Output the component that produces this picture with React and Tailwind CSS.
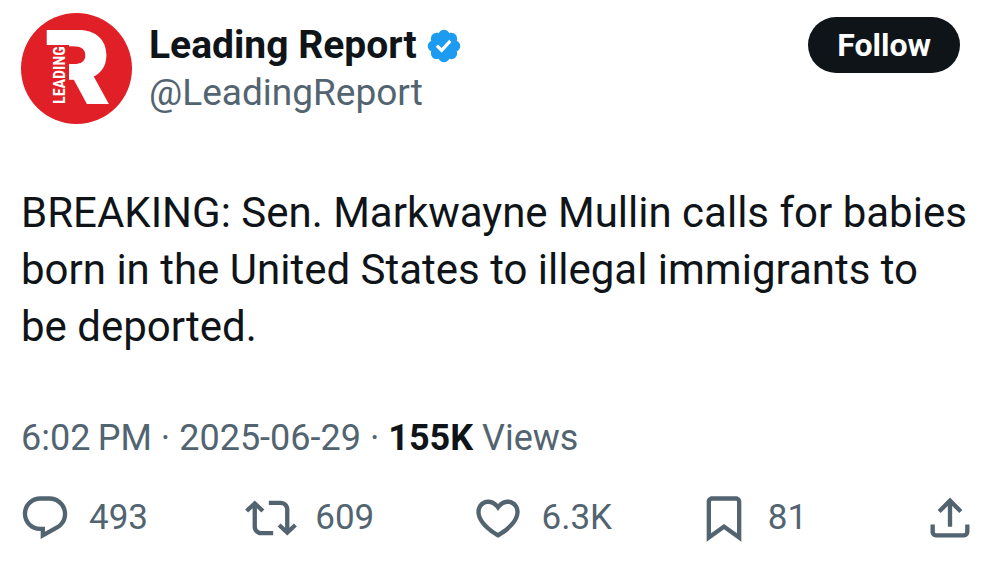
import React from "react";

const ICONS = {
  reply:
    "M1.751 10c0-4.42 3.584-8 8.005-8h4.366c4.49 0 8.129 3.64 8.129 8.13 0 2.96-1.607 5.68-4.196 7.11l-8.054 4.46v-3.69h-.067c-4.49.1-8.183-3.51-8.183-8.01zm8.005-6c-3.317 0-6.005 2.69-6.005 6 0 3.37 2.77 6.08 6.138 6.01l.351-.01h1.761v2.3l5.087-2.81c1.951-1.08 3.163-3.13 3.163-5.36 0-3.39-2.744-6.13-6.129-6.13H9.756z",
  repost:
    "M4.5 3.88l4.432 4.14-1.364 1.46L5.5 7.55V16c0 1.1.896 2 2 2H13v2H7.5c-2.209 0-4-1.79-4-4V7.55L1.432 9.48.068 8.02 4.5 3.88zM16.5 6H11V4h5.5c2.209 0 4 1.79 4 4v8.45l2.068-1.93 1.364 1.46-4.432 4.14-4.432-4.14 1.364-1.46 2.068 1.93V8c0-1.1-.896-2-2-2z",
  like:
    "M16.697 5.5c-1.222-.06-2.679.51-3.89 2.16l-.805 1.09-.806-1.09C9.984 6.01 8.526 5.44 7.304 5.5c-1.243.07-2.349.78-2.91 1.91-.552 1.12-.633 2.78.479 4.82 1.074 1.97 3.257 4.27 7.129 6.61 3.87-2.34 6.052-4.64 7.126-6.61 1.111-2.04 1.03-3.7.477-4.82-.561-1.13-1.666-1.84-2.908-1.91zm4.187 7.69c-1.351 2.48-4.001 5.12-8.379 7.67l-.503.3-.504-.3c-4.379-2.55-7.029-5.19-8.382-7.67-1.36-2.5-1.41-4.86-.514-6.67.887-1.79 2.647-2.91 4.601-3.01 1.651-.09 3.368.56 4.798 2.01 1.429-1.45 3.146-2.1 4.796-2.01 1.954.1 3.714 1.22 4.601 3.01.896 1.81.846 4.17-.514 6.67z",
  bookmark:
    "M4 4.5C4 3.12 5.119 2 6.5 2h11C18.881 2 20 3.12 20 4.5v18.44l-8-5.71-8 5.71V4.5zM6.5 4c-.276 0-.5.22-.5.5v14.56l6-4.29 6 4.29V4.5c0-.28-.224-.5-.5-.5h-11z",
  share:
    "M12 2.59l5.7 5.7-1.41 1.42L13 6.41V16h-2V6.41l-3.3 3.3-1.41-1.42L12 2.59zM21 15l-.02 3.51c0 1.38-1.12 2.49-2.5 2.49H5.5C4.11 21 3 19.88 3 18.5V15h2v3.5c0 .28.22.5.5.5h12.98c.28 0 .5-.22.5-.5L19 15h2z",
};

function Avatar() {
  return (
    <svg viewBox="0 0 112 112" className="size-28 shrink-0" role="img" aria-label="Leading Report logo">
      <circle cx="55.5" cy="56.5" r="55.5" fill="#e11f26" />
      <text x="21" y="92" fontFamily="Inter, sans-serif" fontWeight="900" fontSize="102" fill="#fff">
        R
      </text>
      <rect x="24" y="33" width="24" height="61" fill="#e11f26" />
      <text
        transform="translate(44 92) rotate(-90)"
        fontFamily="'Roboto Condensed', Roboto, sans-serif"
        fontWeight="700"
        fontSize="16"
        fill="#fff"
      >
        LEADING
      </text>
    </svg>
  );
}

function Verified() {
  return (
    <svg viewBox="0 0 22 22" className="size-[38px] shrink-0" fill="#1d9bf0" role="img" aria-label="Verified account">
      <path d="M20.396 11c-.018-.646-.215-1.275-.57-1.816-.354-.54-.852-.972-1.438-1.246.223-.607.27-1.264.14-1.897-.131-.634-.437-1.218-.882-1.687-.47-.445-1.053-.75-1.687-.882-.633-.13-1.29-.083-1.897.14-.273-.587-.704-1.086-1.245-1.44S11.647 1.62 11 1.604c-.646.017-1.273.213-1.813.568s-.969.854-1.24 1.44c-.608-.223-1.267-.272-1.902-.14-.635.13-1.22.436-1.69.882-.445.47-.749 1.055-.878 1.688-.13.633-.08 1.29.144 1.896-.587.274-1.087.705-1.443 1.245-.356.54-.555 1.17-.574 1.817.02.647.218 1.276.574 1.817.356.54.856.972 1.443 1.245-.224.606-.274 1.263-.144 1.896.13.634.433 1.218.877 1.688.47.443 1.054.747 1.687.878.633.132 1.29.084 1.897-.136.274.586.705 1.084 1.246 1.439.54.354 1.17.551 1.816.569.647-.016 1.276-.213 1.817-.567s.972-.854 1.245-1.44c.604.239 1.266.296 1.903.164.636-.132 1.22-.447 1.68-.907.46-.46.776-1.044.908-1.681s.075-1.299-.165-1.903c.586-.274 1.084-.705 1.439-1.246.354-.54.551-1.17.569-1.816zM9.662 14.85l-3.429-3.428 1.293-1.302 2.072 2.072 4.4-4.794 1.347 1.246z" />
    </svg>
  );
}

function Action({ icon, label, count }) {
  return (
    <button type="button" aria-label={label} className="flex items-center gap-[18px] text-[35px] leading-[52px]">
      <svg viewBox="0 0 24 24" className="size-[52px] shrink-0" fill="currentColor" aria-hidden="true">
        <path d={ICONS[icon]} />
      </svg>
      {count && <span>{count}</span>}
    </button>
  );
}

export default function App() {
  return (
    <article className="min-h-screen bg-white pt-3 pr-6 pb-8 pl-[21px] font-['Roboto',sans-serif] text-[#0f1419]">
      <header className="flex items-start gap-4">
        <Avatar />
        <div className="min-w-0 flex-1 pt-2.5 text-[37px] leading-[47px]">
          <div className="flex items-center gap-2">
            <h1 className="text-[39px] font-bold">Leading Report</h1>
            <Verified />
          </div>
          <a href="#profile" className="text-[#536471]">@LeadingReport</a>
        </div>
        <button type="button" className="mt-[5px] mr-4 h-14 rounded-full bg-[#0f1419] px-[29px] text-[32px] font-bold text-white">
          Follow
        </button>
      </header>

      <p className="mt-[60px] text-[42px] leading-[57px]">
        BREAKING: Sen. Markwayne Mullin calls for babies born in the United States to illegal immigrants to be{"\u00a0"}deported.
      </p>

      <p className="mt-[59px] text-4xl leading-[48px] text-[#536471]">
        <time dateTime="2025-06-29T18:02">6:02{"\u2009"}PM · 2025-06-29</time> ·{" "}
        <strong className="font-bold text-[#0f1419]">155K</strong> Views
      </p>

      <div className="mt-[30px] -ml-0.5 grid grid-cols-[1fr_1fr_1fr_1fr_auto] text-[#536471]">
        <Action icon="reply" label="Reply, 493" count="493" />
        <Action icon="repost" label="Repost, 609" count="609" />
        <Action icon="like" label="Like, 6.3K" count="6.3K" />
        <Action icon="bookmark" label="Bookmark, 81" count="81" />
        <Action icon="share" label="Share" />
      </div>
    </article>
  );
}
